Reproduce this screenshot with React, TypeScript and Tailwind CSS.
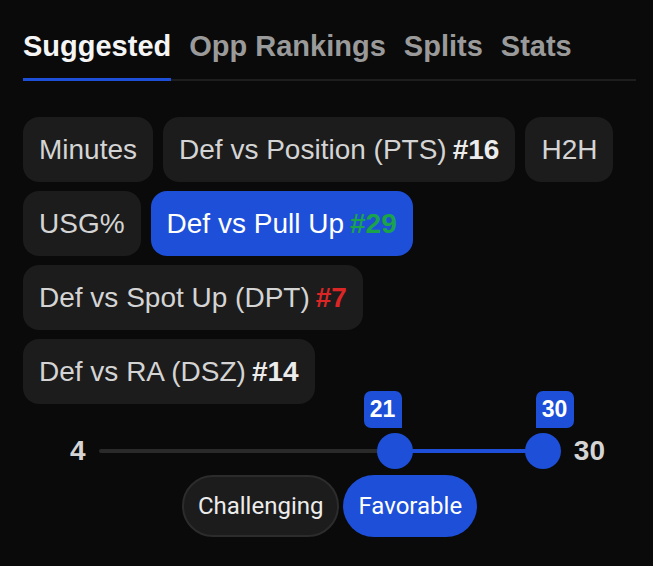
import React from "react";

const chipBase =
  "flex h-[65px] items-center rounded-2xl px-4 text-[28px] leading-[32px]";

function Chip({
  label,
  rank,
  rankClass,
  active,
}: {
  label: string;
  rank?: string;
  rankClass?: string;
  active?: boolean;
}) {
  return (
    <div
      className={
        chipBase +
        (active ? " bg-[#1d4fd8] text-white" : " bg-[#1c1c1c] text-[#d4d4d4]")
      }
    >
      <span>{label}</span>
      {rank && <span className={"ml-[6px] font-bold " + (rankClass ?? "")}>{rank}</span>}
    </div>
  );
}

export default function App() {
  return (
    <div
      className="h-[566px] w-full overflow-hidden bg-[#0a0a0a] pl-[23px] pr-[17px] pt-[31px]"
      style={{ fontFamily: '"Liberation Sans", Arial, sans-serif' }}
    >
      {/* Tabs */}
      <div className="flex gap-[18px] border-b-2 border-[#1e1e1e]">
        {["Suggested", "Opp Rankings", "Splits", "Stats"].map((t, i) => (
          <div
            key={t}
            className={
              "relative pb-[17px] text-[29px] font-bold leading-[31px] " +
              (i === 0 ? "text-[#f5f5f5]" : "text-[#9a9a9a]")
            }
          >
            {t}
            {i === 0 && (
              <div className="absolute -bottom-[2px] left-0 right-0 h-[3px] bg-[#1d4fd8]" />
            )}
          </div>
        ))}
      </div>

      {/* Chips */}
      <div className="mt-[36px] flex flex-wrap gap-x-[10px] gap-y-[9px]">
        <Chip label="Minutes" />
        <Chip label="Def vs Position (PTS)" rank="#16" rankClass="text-[#ececec]" />
        <Chip label="H2H" />
        <Chip label="USG%" />
        <Chip label="Def vs Pull Up" rank="#29" rankClass="text-[#1aa34a]" active />
        <Chip label="Def vs Spot Up (DPT)" rank="#7" rankClass="text-[#dc2626]" />
        <Chip label="Def vs RA (DSZ)" rank="#14" rankClass="text-[#ececec]" />
      </div>

      {/* Slider */}
      <div className="ml-[47px] mt-[29px] flex w-[535px] items-center gap-[13px]">
        <span className="text-[28px] font-bold leading-[32px] text-[#d4d4d4]">4</span>
        <div className="relative h-9 flex-1">
          <div className="absolute left-0 right-0 top-[16px] h-[4px] rounded-full bg-[#2a2a2a]" />
          <div className="absolute left-[296px] top-[16px] h-[4px] w-[148px] bg-[#1d4fd8]" />
          <div className="absolute left-[278px] top-0 h-9 w-9 rounded-full bg-[#1d4fd8]" />
          <div className="absolute left-[426px] top-0 h-9 w-9 rounded-full bg-[#1d4fd8]" />
          <div className="absolute left-[265px] top-[-42px] flex h-[37px] w-[38px] items-center justify-center rounded-[7px] rounded-br-none bg-[#1d4fd8] text-[23px] font-bold text-white">
            21
          </div>
          <div className="absolute left-[437px] top-[-42px] flex h-[37px] w-[38px] items-center justify-center rounded-[7px] rounded-bl-none bg-[#1d4fd8] text-[23px] font-bold text-white">
            30
          </div>
        </div>
        <span className="text-[28px] font-bold leading-[32px] text-[#d4d4d4]">30</span>
      </div>

      {/* Buttons */}
      <div
        className="mt-[6px] flex justify-center gap-[4px]"
        style={{ fontFamily: "Roboto, sans-serif" }}
      >
        <div className="flex h-[62px] items-center rounded-full border-2 border-[#2c2c2c] bg-[#1c1c1c] px-[14px] text-[24px] text-[#ececec]">
          Challenging
        </div>
        <div className="flex h-[62px] items-center rounded-full bg-[#1d4fd8] px-[15px] text-[24px] text-white">
          Favorable
        </div>
      </div>
    </div>
  );
}
